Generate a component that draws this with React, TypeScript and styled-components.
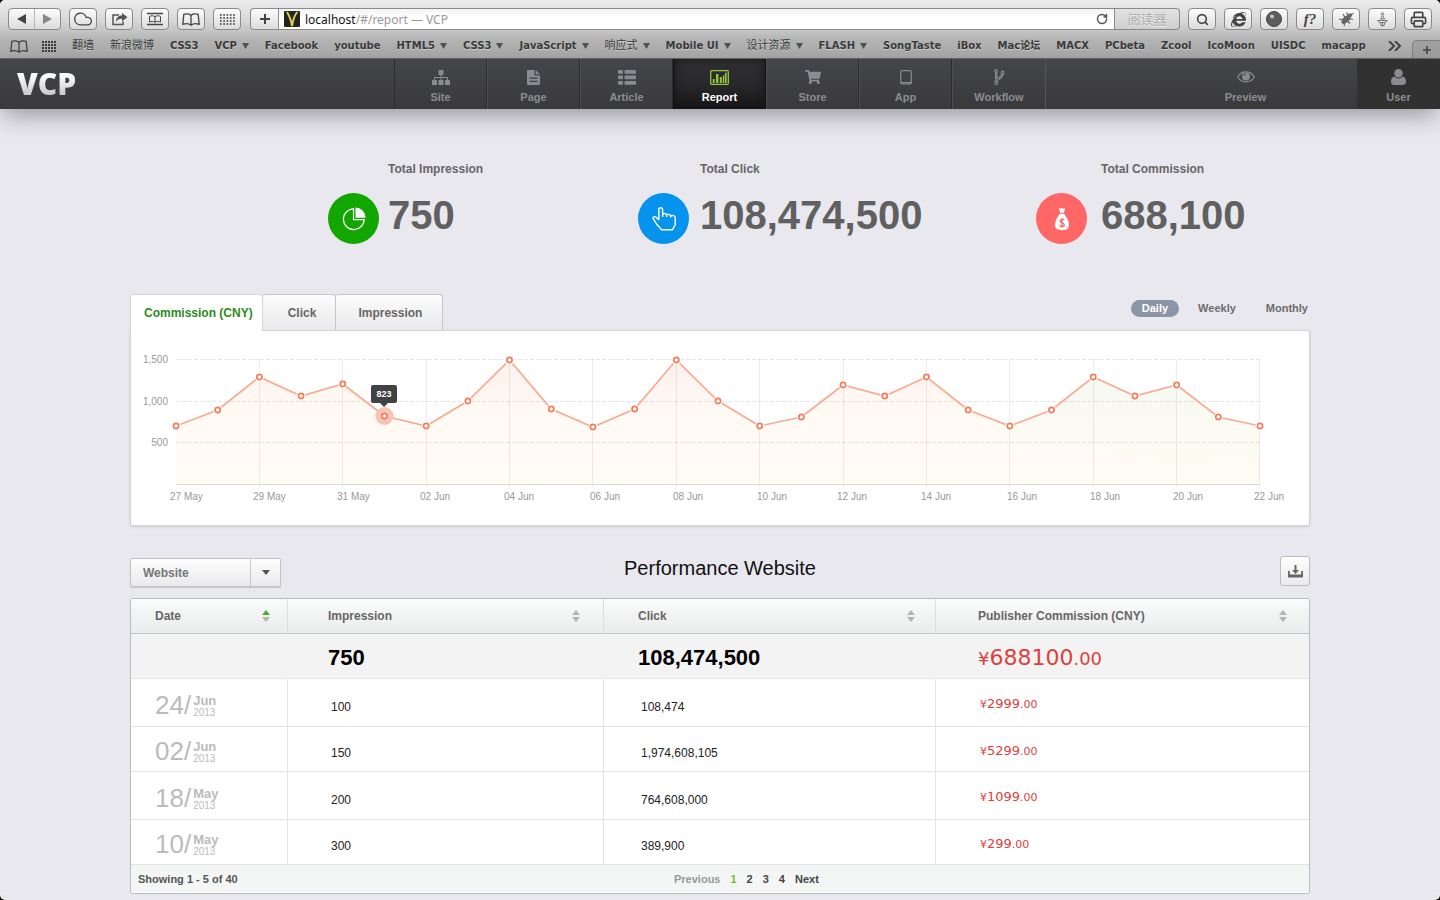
import React from 'react';
import styled, { createGlobalStyle, css } from 'styled-components';
import { Cloud, Printer, RotateCw, Search } from 'lucide-react';
import { FaInternetExplorer, FaShoppingCart } from 'react-icons/fa';

const ui = '"Liberation Sans", Arial, sans-serif';
const mac = '"Noto Sans", "Noto Sans CJK SC", sans-serif';
const bookmarkFont = '"DejaVu Sans", "Noto Sans CJK SC", sans-serif';
const money = '"DejaVu Sans", "Lucida Grande", sans-serif';

const GlobalStyle = createGlobalStyle`
  *, *::before, *::after { box-sizing: border-box; }
  html { background: #000; }
  body { margin: 0; font-family: ${ui}; font-size: 12px; color: #666; }
  button, input, select { font: inherit; color: inherit; margin: 0; padding: 0; border: 0; background: none; }
  a { color: inherit; text-decoration: none; }
  svg { display: block; }
`;

const Window = styled.div`
  min-height: 100vh;
  overflow: hidden;
  border-radius: 5px;
  background: #e9e8ee;
`;

/* ---------- browser chrome ---------- */

const Chrome = styled.div`
  height: 59px;
  display: flex;
  flex-direction: column;
  background: linear-gradient(#ececec, #d6d6d6 22px, #b3b3b3 40px, #aaaaaa);
  border-bottom: 1px solid #66666a;
  font-family: ${mac};
`;

const Toolbar = styled.div`
  display: flex;
  gap: 8px;
  padding: 8px 8px 0;
`;

const ToolButton = styled.button<{ $split?: boolean }>`
  width: 28px;
  height: 22px;
  display: flex;
  align-items: center;
  justify-content: center;
  border: 1px solid #8a8a8a;
  border-radius: 4px;
  background: linear-gradient(#fcfcfc, #dcdcdc);
  color: #444;
  ${(p) => p.$split && css`border-radius: 4px 0 0 4px; border-right: 0;`}
`;

const History = styled.div`
  display: flex;
  width: 53px;
  height: 22px;
  border: 1px solid #8a8a8a;
  border-radius: 4px;
  background: linear-gradient(#fcfcfc, #dcdcdc);
`;

const HistoryButton = styled.button`
  flex: 1;
  display: flex;
  align-items: center;
  justify-content: center;
  & + & { border-left: 1px solid #b5b5b5; }
`;

const Wide = styled.div`
  flex: 1;
  display: flex;
  min-width: 0;
  padding-left: 1px;
`;

const Address = styled.div`
  flex: 1;
  display: flex;
  align-items: center;
  height: 22px;
  min-width: 0;
  padding: 0 6px 0 5px;
  border: 1px solid #8a8a8a;
  background: linear-gradient(#f3f3f3, #fff 8px);
  font-size: 12px;
  label { color: #111; margin-left: 5px; }
  input { flex: 1; min-width: 0; color: #999; outline: none; }
`;

const Reader = styled.button`
  width: 65px;
  height: 22px;
  border: 1px solid #8a8a8a;
  border-left: 0;
  border-radius: 0 4px 4px 0;
  background: linear-gradient(#e2e2e2, #cfcfcf);
  color: #aaa;
  font-size: 13px;
  line-height: 20px;
  text-shadow: 0 1px 0 #f4f4f4;
`;

const ScriptGlyph = styled.span`
  font: italic bold 15px/20px "Liberation Serif", serif;
`;

const Bookmarks = styled.nav`
  flex: 1;
  display: flex;
  align-items: center;
  gap: 16px;
  padding: 4px 0 0 10px;
  color: #3a3a3a;
  font-family: ${bookmarkFont};
  font-size: 10px;
  font-weight: 700;
  line-height: 16px;
  text-shadow: 0 1px 0 rgba(255, 255, 255, 0.4);
`;

const Bookmark = styled.a`
  display: flex;
  align-items: center;
  gap: 5px;
  white-space: nowrap;
  &:lang(zh) { font-size: 11px; font-weight: 400; }
`;

const Shortcuts = styled.div`
  display: flex;
  align-items: center;
  gap: 14px;
`;

const Overflow = styled.button`
  margin-left: auto;
`;

const NewTab = styled.button`
  align-self: flex-end;
  display: flex;
  align-items: center;
  justify-content: center;
  width: 28px;
  height: 18px;
  margin-left: -6px;
  border: 1px solid #808080;
  border-width: 1px 0 0 1px;
  border-radius: 5px 0 0 0;
  background: #a0a0a0;
`;

/* ---------- application header ---------- */

const Header = styled.header`
  position: relative;
  display: flex;
  height: 50px;
  background: linear-gradient(#45464a, #39393c);
  box-shadow: 0 9px 24px -3px rgba(30, 30, 40, 0.42);
`;

const LogoArea = styled.div`
  flex: 0 1 394px;
  padding-left: 17px;
`;

const Logo = styled.a`
  display: inline-block;
  font: 800 30px/50px "Open Sans", sans-serif;
  background: linear-gradient(#fff 16px, #c8c8ca 36px);
  background-clip: text;
  -webkit-background-clip: text;
  color: transparent;
`;

const MainNav = styled.nav`
  display: flex;
  border-right: 1px solid #55565a;
`;

const navCell = css`
  display: flex;
  flex-direction: column;
  align-items: center;
  gap: 4px;
  height: 50px;
  padding-top: 10px;
  color: #8b8c91;
  font-size: 11px;
  font-weight: 700;
  line-height: 16px;
`;

const NavItem = styled.a<{ $active?: boolean }>`
  ${navCell}
  width: 93px;
  border-right: 1px solid #2c2c2f;
  border-left: 1px solid #4d4e52;
  &:first-child { border-left-color: #2c2c2f; }
  &:last-child { border-right: 0; }
  ${(p) => p.$active && css`
    color: #fff;
    border-color: #111;
    background: linear-gradient(#303032, #29292b 50%, #161617);
    box-shadow: inset 0 0 8px #151516;
  `}
`;

const IconSlot = styled.span`
  height: 16px;
  display: flex;
  align-items: center;
`;

const Preview = styled.a`
  ${navCell}
  width: 93px;
  margin: 0 65px 0 auto;
`;

const User = styled.a`
  ${navCell}
  width: 83px;
  background: #313131;
`;

/* ---------- page body ---------- */

const Main = styled.main`
  width: 100%;
  max-width: 1180px;
  margin: 0 auto;
  padding: 52px 0 6px;
`;

const Stats = styled.section`
  display: grid;
  grid-template-columns: 310fr 398fr 274fr;
  padding-left: 198px;
  margin-bottom: 50px;
`;

const Stat = styled.div<{ $gap: number }>`
  display: grid;
  grid-template-columns: 51px auto;
  grid-template-rows: 16px 51px;
  justify-content: start;
  column-gap: ${(p) => p.$gap}px;
  row-gap: 16px;
`;

const StatLabel = styled.h2`
  grid-column: 2;
  margin: 0;
  font-size: 12px;
  line-height: 16px;
  color: #666;
`;

const StatIcon = styled.span<{ $color: string }>`
  display: flex;
  align-items: center;
  justify-content: center;
  border-radius: 50%;
  background: ${(p) => p.$color};
`;

const StatValue = styled.strong`
  font-size: 40px;
  line-height: 44px;
  color: #606060;
`;

const TabRow = styled.div`
  display: flex;
  justify-content: space-between;
  height: 36px;
`;

const Tabs = styled.div`
  display: flex;
`;

const Tab = styled.button<{ $active?: boolean }>`
  height: 36px;
  padding: 0 19px 0 25px;
  border: 1px solid #c6c6ca;
  border-width: 1px 1px 0 0;
  border-radius: 3px 3px 0 0;
  background: linear-gradient(#fcfcfc, #e9e9eb);
  font-weight: 700;
  line-height: 34px;
  ${(p) => p.$active && css`
    height: 37px;
    padding: 0 9px 0 13px;
    border-left-width: 1px;
    border-color: #d4d4d9;
    background: #fff;
    color: #2a8c1c;
    line-height: 36px;
    z-index: 1;
  `}
  &:last-child { padding: 0 20px 0 22px; }
`;

const Periods = styled.div`
  display: flex;
  align-items: flex-start;
  gap: 8px;
  padding-top: 6px;
`;

const Period = styled.button<{ $active?: boolean }>`
  height: 17px;
  padding: 0 11px;
  border-radius: 9px;
  font-size: 11px;
  font-weight: 700;
  line-height: 17px;
  color: ${(p) => (p.$active ? '#fff' : '#6c6c6c')};
  background: ${(p) => (p.$active ? '#8b95a5' : 'none')};
  &:last-child { padding-right: 2px; }
`;

const Panel = styled.section`
  border: 1px solid #d4d4d9;
  border-radius: 0 3px 3px 3px;
  background: #fff;
  box-shadow: 0 1px 3px rgba(0, 0, 0, 0.12);
  svg { width: 100%; height: auto; }
`;

const ListBar = styled.div`
  display: grid;
  grid-template-columns: 1fr auto 1fr;
  align-items: start;
  height: 42px;
  margin-top: 30px;
`;

const SelectBox = styled.div`
  display: grid;
  grid-template-columns: 119px 30px;
  width: 151px;
  height: 29px;
  margin-top: 2px;
  border: 1px solid #c3c3c6;
  border-radius: 2px;
  background: linear-gradient(#fdfdfd, #eaeaec);
  box-shadow: 0 1px 1px rgba(0, 0, 0, 0.15);
  select {
    grid-area: 1 / 1 / 2 / 3;
    appearance: none;
    padding-left: 12px;
    font-weight: 700;
    color: #777;
    outline: none;
  }
  span {
    grid-area: 1 / 2;
    display: flex;
    align-items: center;
    justify-content: center;
    border-left: 1px solid #c6c6c9;
    pointer-events: none;
  }
`;

const Title = styled.h1`
  margin: 0;
  font-size: 20px;
  font-weight: 400;
  line-height: 24px;
  color: #111;
`;

const Download = styled.button`
  justify-self: end;
  display: flex;
  align-items: center;
  justify-content: center;
  width: 30px;
  height: 30px;
  border: 1px solid #bcbcbf;
  border-radius: 3px;
  background: linear-gradient(#fefefe, #ebebec);
`;

const TableFrame = styled.div`
  border: 1px solid #b9bcbc;
  border-radius: 2px;
  background: #fff;
  padding-bottom: 1px;
`;

const Table = styled.table`
  width: 100%;
  table-layout: fixed;
  border-collapse: separate;
  border-spacing: 0;
  th, td { padding: 0; text-align: left; }
`;

const HeadCell = styled.th<{ $left: number; $right: number }>`
  height: 35px;
  border-bottom: 1px solid #c2c5c5;
  background: linear-gradient(#fbfcfc, #e9ecea);
  &:not(:last-child) { border-right: 1px solid #dcdfdf; }
  button {
    display: flex;
    align-items: center;
    justify-content: space-between;
    width: 100%;
    height: 34px;
    padding: 0 ${(p) => p.$right}px 0 ${(p) => p.$left}px;
    font-weight: 700;
    color: #666;
  }
`;

const SumCell = styled.td<{ $left: number }>`
  && { padding: 4px 0 0 ${(p) => p.$left}px; }
  height: 45px;
  border-bottom: 1px solid #e4e4e4;
  background: #f3f3f3;
  font-size: 22px;
  font-weight: 700;
  line-height: 28px;
  color: #000;
`;

const Cell = styled.td<{ $left: number; $top?: number; $tall?: boolean }>`
  && { padding: ${(p) => p.$top ?? 4}px 0 0 ${(p) => p.$left}px; }
  height: ${(p) => (p.$tall ? 48 : 45)}px;
  border-bottom: 1px solid #e2e2e2;
  line-height: 16px;
  color: #222;
  &:not(:last-child) { border-right: 1px solid #e4e4e4; }
`;

const Price = styled.span<{ $large?: boolean }>`
  font-family: ${money};
  font-weight: 400;
  font-size: ${(p) => (p.$large ? 22 : 13)}px;
  color: #e0403c;
  small { font-size: ${(p) => (p.$large ? 18 : 11)}px; }
`;

const DateMark = styled.time`
  display: flex;
  align-items: center;
  gap: 2px;
  color: #bbb;
`;

const Day = styled.span`
  font-size: 26px;
  line-height: 28px;
`;

const MonthYear = styled.span`
  display: flex;
  flex-direction: column;
  padding-top: 2px;
  font-size: 10px;
  line-height: 10px;
  b { font-size: 13px; line-height: 14px; }
`;

const FootCell = styled.td<{ $left: number }>`
  && { padding-left: ${(p) => p.$left}px; }
  height: 27px;
  background: #f4f6f5;
  font-size: 11px;
  font-weight: 700;
  color: #555;
`;

const Pager = styled.nav`
  display: flex;
  gap: 10px;
`;

const PageLink = styled.a<{ $tone?: string }>`
  color: ${(p) => p.$tone || '#444'};
`;

/* ---------- drawings ---------- */

const Caret = ({ w = 7, h = 6 }: { w?: number; h?: number }) => (
  <svg width={w} height={h} viewBox="0 0 8 6" preserveAspectRatio="none"><path d="M0 0h8L4 6z" fill="#505050" /></svg>
);

const Sorter = ({ up = false }: { up?: boolean }) => (
  <svg width="8" height="12" viewBox="0 0 8 12">
    <path d="M0 5l4-5 4 5z" fill={up ? '#4aa83a' : '#b4b4b4'} />
    <path d="M0 7h8l-4 5z" fill="#b4b4b4" />
  </svg>
);

const Dots = ({ cols, rows, gap, size }: { cols: number; rows: number; gap: number; size: number }) => (
  <svg width={cols * gap - gap + size} height={rows * gap - gap + size}>
    {Array.from({ length: cols * rows }, (_, i) => (
      <rect key={i} x={(i % cols) * gap} y={Math.floor(i / cols) * gap} width={size} height={size} fill="#3c3c3c" />
    ))}
  </svg>
);

const Plus = ({ s }: { s: number }) => (
  <svg width={s} height={s} viewBox="0 0 10 10"><path d="M5 0v10M0 5h10" stroke="#444" strokeWidth="2" /></svg>
);

const BookIcon = () => (
  <svg width="18" height="13" viewBox="0 0 18 13" fill="none" stroke="#444" strokeWidth="1.300" strokeLinejoin="round">
    <path d="M9 2.500C7.500.8 4 .4 1.800 1.400L.8 11.400c2.400-1 6-1 8.200.8 2.200-1.800 5.800-1.800 8.200-.8l-1-10C14 .4 10.500.8 9 2.500zM9 2.500v9.500" />
  </svg>
);

const SiteIcon = () => (
  <svg width="18" height="15" viewBox="0 0 18 15" fill="currentColor">
    <rect x="6.5" width="5" height="5" rx=".6" /><rect y="10" width="5" height="5" rx=".6" />
    <rect x="6.5" y="10" width="5" height="5" rx=".6" /><rect x="13" y="10" width="5" height="5" rx=".6" />
    <path d="M9 5v5M2.5 10V7.5h13V10" fill="none" stroke="currentColor" />
  </svg>
);
const PageIcon = () => (
  <svg width="13" height="15" viewBox="0 0 13 15">
    <path fillRule="evenodd" fill="currentColor" d="M1 0h6.500v5.500H13V14a1 1 0 0 1-1 1H1a1 1 0 0 1-1-1V1a1 1 0 0 1 1-1zM2.500 7.500v1.200h8V7.500zM2.500 10.800V12h8v-1.200zM8.700 0L13 4.300H8.700z" />
  </svg>
);
const ArticleIcon = () => (
  <svg width="18" height="15" viewBox="0 0 18 15" fill="currentColor">
    {[0, 5.5, 11].map((y) => <g key={y}><rect y={y} width="5" height="3.8" rx="1" /><rect x="6.500" y={y} width="11.500" height="3.800" rx="1" /></g>)}
  </svg>
);
const ReportIcon = () => (
  <svg width="19" height="15" viewBox="0 0 19 15" fill="#92c83e">
    <rect x=".7" y=".7" width="17.600" height="13.600" rx="1" fill="none" stroke="#92c83e" strokeWidth="1.300" />
    <path d="M2.700 9h2v4h-2zM6 4h2.400v9H6zM9.800 7h2v6h-2zM12.800 5.500h1.600V13h-1.600zM15 2.800h1.600V13H15z" />
  </svg>
);
const AppIcon = () => (
  <svg width="12" height="15" viewBox="0 0 12 15">
    <rect x=".7" y=".7" width="10.600" height="13.300" rx="1.600" fill="none" stroke="currentColor" strokeWidth="1.200" />
    <path d="M1 12h10v1.500H7l-1-.7-1 .7H1z" fill="currentColor" />
  </svg>
);
const FlowIcon = () => (
  <svg width="11" height="16" viewBox="0 0 11 16" fill="none" stroke="currentColor" strokeWidth="1.100">
    <circle cx="2.200" cy="2" r="1.400" /><circle cx="2.200" cy="14" r="1.400" /><circle cx="8.600" cy="3.500" r="1.400" />
    <path d="M1.600 3.300v9.400M2.900 3.300v6.200c3-1.300 4.600-2.500 5-4.600M9.200 4.900c-.3 3.500-2.700 5-6.100 6.600v1.200" />
  </svg>
);
const EyeIcon = () => (
  <svg width="18" height="12" viewBox="0 0 18 12">
    <path d="M.7 6C4.500-.8 13.500-.8 17.300 6 13.500 12.500 4.500 12.500.7 6z" fill="none" stroke="currentColor" strokeWidth="1.200" />
    <circle cx="9" cy="5.400" r="4" fill="currentColor" /><path d="M6.800 5A2.400 2.400 0 0 1 9 2.800" fill="none" stroke="#444" />
  </svg>
);
const UserIcon = () => (
  <svg width="15" height="16" viewBox="0 0 15 16" fill="currentColor">
    <circle cx="7.500" cy="4.200" r="4.200" />
    <path d="M3.200 7.600C1 8.200 0 10 0 12.800 0 14.800 1.200 16 3 16h9c1.800 0 3-1.200 3-3.200 0-2.800-1-4.600-3.200-5.200a6 6 0 0 1-8.600 0z" />
  </svg>
);

const PieIcon = () => (
  <svg width="24" height="24" viewBox="0 0 24 24">
    <path d="M11.500 1.800A10.400 10.400 0 1 0 22.200 12.700H11.500z" fill="none" stroke="#fff" strokeWidth="1.200" />
    <path d="M13.500.5A10.200 10.200 0 0 1 23.500 10.700h-10z" fill="#fff" />
  </svg>
);
const HandIcon = () => (
  <svg width="24" height="24" viewBox="0 0 24 24" fill="none" stroke="#fff" strokeWidth="1.400" strokeLinejoin="round">
    <path d="M6.800 13V2.600a1.900 1.900 0 0 1 3.800 0V10M10.600 7.200c1-1.200 4-1 4 .8v2M14.600 8c1-1 4-.8 4 1v1.600M18.600 9c1.500-1 4.600-.6 4.600 1.700V18l-2.700 4.700H9.500L4.200 16.500l-3-4.800C.4 9.500 3.300 9 4.400 10.500L6.800 13" />
  </svg>
);
const BagIcon = () => (
  <svg width="14" height="24" viewBox="0 0 14 24">
    <path d="M4 1l1.500.7L7 1l1.500.7L10 1 9 5.800H5zM5 6.800h4C11.500 10 14 14 14 18c0 3.500-2.500 5.200-7 5.200S0 21.500 0 18c0-4 2.500-8 5-11.200z" fill="#fff" />
    <path d="M9.200 13.300C8.500 12 5 12 5 14s4.300 1.700 4.300 3.900-3.700 2.200-4.600.5M7 11.200v9.300" fill="none" stroke="#ff6666" strokeWidth="1.300" />
  </svg>
);

/* ---------- chart ---------- */

const levels = [426, 410, 377, 396, 384, 416, 426, 401, 360, 409, 427, 409, 360, 401, 426, 417, 385, 396, 377, 410, 426, 410, 377, 396, 385, 417, 426];
const dayLabels: [string, number][] = [
  ['27 May', 170], ['29 May', 253], ['31 May', 337], ['02 Jun', 420], ['04 Jun', 504], ['06 Jun', 590], ['08 Jun', 673],
  ['10 Jun', 757], ['12 Jun', 837], ['14 Jun', 921], ['16 Jun', 1007], ['18 Jun', 1090], ['20 Jun', 1173], ['22 Jun', 1254],
];
const points = levels.map((y, i) => [45 + (i * 1084) / 26, y - 331]);
const line = points.map((p) => p.join(' ')).join('L');

const Chart = () => (
  <svg viewBox="0 0 1178 194" role="img" aria-label="Commission per day" fontFamily={ui}>
    <defs>
      <linearGradient id="area" gradientUnits="userSpaceOnUse" x1="0" y1="28" x2="0" y2="154">
        <stop offset="0" stopColor="#fdf0ec" /><stop offset=".45" stopColor="#fffaf4" /><stop offset="1" stopColor="#fffcf4" />
      </linearGradient>
      <linearGradient id="late" gradientUnits="userSpaceOnUse" x1="0" y1="40" x2="0" y2="132">
        <stop offset="0" stopColor="#f8f8f3" /><stop offset=".75" stopColor="#fbfbf3" /><stop offset="1" stopColor="#fdfbf1" />
      </linearGradient>
    </defs>
    <path d={`M45 153.500L${line}L1129 153.500z`} fill="url(#area)" />
    <path d={`M878.900 118L${points.slice(20).map((p) => p.join(' ')).join('L')}L1129 120Q1060 142 1010 127T878.900 120z`} fill="url(#late)" />
    {dayLabels.slice(1).map((_, i) => (
      <path key={i} d={`M${Math.floor(45 + ((i + 1) * 1084) / 13) - (i === 12 ? 0.5 : -0.5)} 28V156`} stroke="#000" strokeOpacity=".07" />
    ))}
    {[28.500, 70.500, 111.500].map((y, i) => (
      <g key={y}>
        <path d={`M45 ${y}H1128`} stroke="#000" strokeOpacity=".1" strokeDasharray="4 2" />
        <text x="37" y={Math.floor(y) + 4} textAnchor="end" fontSize="10" fill="#999">{['1,500', '1,000', '500'][i]}</text>
      </g>
    ))}
    <path d="M45 153.500H1128" stroke="#d8d8d8" />
    <path d={`M${line}`} fill="none" stroke="#f8ab92" strokeWidth="1.700" />
    <circle cx={points[5][0]} cy={points[5][1]} r="9" fill="#f9c3b3" />
    {points.map(([x, y], i) => (
      <g key={i}>
        {i !== 5 && <circle cx={x} cy={y} r="4.500" fill="#fff" />}
        <circle cx={x} cy={y} r="2.600" fill="#fff" stroke="#f47c5a" strokeWidth="1.700" />
      </g>
    ))}
    <path d="M242 54h22a2 2 0 0 1 2 2v14a2 2 0 0 1-2 2h-7l-4 4-4-4h-7a2 2 0 0 1-2-2V56a2 2 0 0 1 2-2z" fill="#414342" />
    <text x="253" y="66" textAnchor="middle" fontSize="9" fontWeight="700" fill="#fff">823</text>
    {dayLabels.map(([t, x]) => <text key={t} x={x - 131} y="169" fontSize="10" fill="#999">{t}</text>)}
  </svg>
);

/* ---------- data ---------- */

type BookmarkEntry = { name: string; menu?: boolean; lang?: string };
const bookmarks: BookmarkEntry[] = [
  { name: '翻墙', lang: 'zh' }, { name: '新浪微博', lang: 'zh' }, { name: 'CSS3' }, { name: 'VCP', menu: true },
  { name: 'Facebook' }, { name: 'youtube' }, { name: 'HTML5', menu: true }, { name: 'CSS3', menu: true },
  { name: 'JavaScript', menu: true }, { name: '响应式', menu: true, lang: 'zh' }, { name: 'Mobile UI', menu: true },
  { name: '设计资源', menu: true, lang: 'zh' }, { name: 'FLASH', menu: true }, { name: 'SongTaste' }, { name: 'iBox' },
  { name: 'Mac论坛' }, { name: 'MACX' }, { name: 'PCbeta' }, { name: 'Zcool' }, { name: 'IcoMoon' }, { name: 'UISDC' },
  { name: 'macapp' },
];

const sections: [string, React.ReactNode][] = [
  ['Site', <SiteIcon />], ['Page', <PageIcon />], ['Article', <ArticleIcon />], ['Report', <ReportIcon />],
  ['Store', <FaShoppingCart size={16} />], ['App', <AppIcon />], ['Workflow', <FlowIcon />],
];

const stats = [
  { label: 'Total Impression', value: '750', color: '#12a700', gap: 9, icon: <PieIcon /> },
  { label: 'Total Click', value: '108,474,500', color: '#0593ee', gap: 11, icon: <HandIcon /> },
  { label: 'Total Commission', value: '688,100', color: '#ff6666', gap: 14, icon: <BagIcon /> },
];

const columns = [
  { name: 'Date', left: 24, right: 17 }, { name: 'Impression', left: 40, right: 23 },
  { name: 'Click', left: 34, right: 20 }, { name: 'Publisher Commission (CNY)', left: 42, right: 22 },
];

const rows = [
  { day: '24', month: 'Jun', impression: '100', click: '108,474', price: '2999', tall: true },
  { day: '02', month: 'Jun', impression: '150', click: '1,974,608,105', price: '5299', tall: false },
  { day: '18', month: 'May', impression: '200', click: '764,608,000', price: '1099', tall: true },
  { day: '10', month: 'May', impression: '300', click: '389,900', price: '299', tall: false },
];

export default function App() {
  return (
    <Window>
      <GlobalStyle />
      <Chrome>
        <Toolbar>
          <History>
            <HistoryButton aria-label="Back"><svg width="9" height="10"><path d="M9 0v10L0 5z" fill="#444" /></svg></HistoryButton>
            <HistoryButton aria-label="Forward"><svg width="9" height="10"><path d="M0 0v10l9-5z" fill="#888" /></svg></HistoryButton>
          </History>
          <ToolButton aria-label="iCloud"><Cloud size={20} strokeWidth={1.6} /></ToolButton>
          <ToolButton aria-label="Share">
            <svg width="17" height="14" viewBox="0 0 17 14">
              <path d="M8 3H2v9.500h10V9.500" fill="none" stroke="#555" strokeWidth="1.500" />
              <path d="M5 10c0-4 2-6.500 6-6.500V1l5.500 4.300L11 9.300V6.800C8.500 6.500 6.500 7.500 5 10z" fill="#555" />
            </svg>
          </ToolButton>
          <ToolButton aria-label="Top sites">
            <svg width="16" height="14" viewBox="0 0 16 14" fill="none" stroke="#444">
              <path d="M0 1.500h16M0 12.500h16" strokeWidth="1.300" /><path d="M2.500 10V4.500C4 3.500 6.500 3.500 8 4.700c1.500-1.200 4-1.200 5.500-.2V10c-1.500-.8-4-.8-5.500.3C6.500 9.200 4 9.200 2.500 10zM8 4.700v5.600" />
            </svg>
          </ToolButton>
          <ToolButton aria-label="Reading list"><BookIcon /></ToolButton>
          <ToolButton aria-label="All tabs">
            <svg width="15" height="11" viewBox="0 0 15 11" stroke="#333" strokeWidth="1.500">
              <path d="M0 1h15M0 4h15M0 7h15M0 10h15" strokeDasharray="1.600 1.700" />
            </svg>
          </ToolButton>
          <Wide>
            <ToolButton $split aria-label="Add bookmark"><Plus s={10} /></ToolButton>
            <Address>
              <svg width="16" height="16" viewBox="0 0 16 16"><rect width="16" height="16" rx="1" fill="#25251f" /><path d="M3 1c2 3 4 8 5 14C9 9 11 3 13.500 1" fill="none" stroke="#d8cc55" strokeWidth="2" /></svg>
              <label htmlFor="address">localhost</label>
              <input id="address" defaultValue="/#/report — VCP" />
              <RotateCw size={12} strokeWidth={3} color="#555" />
            </Address>
            <Reader>阅读器</Reader>
          </Wide>
          <ToolButton aria-label="Search"><Search size={13} strokeWidth={3} /></ToolButton>
          <ToolButton aria-label="Open in Explorer"><FaInternetExplorer size={15} /></ToolButton>
          <ToolButton aria-label="Lens">
            <svg width="16" height="16"><circle cx="8" cy="8" r="7.500" fill="#5c5c5c" stroke="#444" /><circle cx="6" cy="5.500" r="2" fill="#c4c4c4" /></svg>
          </ToolButton>
          <ToolButton aria-label="Font finder"><ScriptGlyph>f?</ScriptGlyph></ToolButton>
          <ToolButton aria-label="Debug">
            <svg width="16" height="16" viewBox="0 0 16 16">
              <ellipse cx="8" cy="8.500" rx="5.600" ry="3" transform="rotate(-42 8 8.500)" fill="#666" />
              <circle cx="12" cy="4.300" r="2" fill="#666" />
              <path d="M5 9L1 8M7 6.500L5 3M10 5L8.500 1.500M6 11.500l.5 3.500M9 9.500l3 3M11 7.500l4 1M13 3.500l2.500-1" stroke="#666" strokeWidth="1.200" />
            </svg>
          </ToolButton>
          <ToolButton aria-label="Lamp">
            <svg width="11" height="15" viewBox="0 0 11 15" fill="none" stroke="#777"><circle cx="5.500" cy="2" r="1.300" /><path d="M5.500 3.500L3.500 7h4zM.5 8.500h10L8 10.500H3zM3 11l1 2.500h3L8 11M5.500 11v3.500" /></svg>
          </ToolButton>
          <ToolButton aria-label="Print"><Printer size={17} strokeWidth={2.3} /></ToolButton>
        </Toolbar>
        <Bookmarks aria-label="Bookmarks">
          <Shortcuts>
            <BookIcon />
            <Dots cols={5} rows={4} gap={3} size={2} />
          </Shortcuts>
          {bookmarks.map((b, i) => (
            <Bookmark key={i} href="#" lang={b.lang}>{b.name}{b.menu && <Caret />}</Bookmark>
          ))}
          <Overflow aria-label="More bookmarks">
            <svg width="14" height="10" viewBox="0 0 14 10"><path d="M1 0l5 5-5 5M7 0l5 5-5 5" fill="none" stroke="#444" strokeWidth="2" /></svg>
          </Overflow>
          <NewTab aria-label="New tab"><Plus s={8} /></NewTab>
        </Bookmarks>
      </Chrome>

      <Header>
        <LogoArea><Logo href="#">VCP</Logo></LogoArea>
        <MainNav>
          {sections.map(([name, icon]) => (
            <NavItem key={name} href="#" $active={name === 'Report'}><IconSlot>{icon}</IconSlot>{name}</NavItem>
          ))}
        </MainNav>
        <Preview href="#"><IconSlot><EyeIcon /></IconSlot>Preview</Preview>
        <User href="#"><IconSlot><UserIcon /></IconSlot>User</User>
      </Header>

      <Main>
        <Stats>
          {stats.map((s) => (
            <Stat key={s.label} $gap={s.gap}>
              <StatLabel>{s.label}</StatLabel>
              <StatIcon $color={s.color}>{s.icon}</StatIcon>
              <StatValue>{s.value}</StatValue>
            </Stat>
          ))}
        </Stats>

        <TabRow>
          <Tabs>
            <Tab $active>Commission (CNY)</Tab>
            <Tab>Click</Tab>
            <Tab>Impression</Tab>
          </Tabs>
          <Periods>
            <Period $active>Daily</Period>
            <Period>Weekly</Period>
            <Period>Monthly</Period>
          </Periods>
        </TabRow>
        <Panel><Chart /></Panel>

        <ListBar>
          <SelectBox>
            <select aria-label="Group by" defaultValue="Website"><option>Website</option></select>
            <span><Caret w={8} h={5} /></span>
          </SelectBox>
          <Title>Performance Website</Title>
          <Download aria-label="Download">
            <svg width="15" height="13" viewBox="0 0 15 13" fill="#666">
              <path d="M6.500 0h2v5H11L7.500 9 4 5h2.500z" /><path d="M0 6h1.800v3.500h11.400V6H15v6.500H0z" />
            </svg>
          </Download>
        </ListBar>

        <TableFrame>
          <Table>
            <colgroup><col width="157" /><col width="316" /><col width="332" /><col /></colgroup>
            <thead>
              <tr>
                {columns.map((c, i) => (
                  <HeadCell key={c.name} $left={c.left} $right={c.right}><button>{c.name}<Sorter up={i === 0} /></button></HeadCell>
                ))}
              </tr>
            </thead>
            <tbody>
              <tr>
                <SumCell $left={24} />
                <SumCell $left={40}>750</SumCell>
                <SumCell $left={34}>108,474,500</SumCell>
                <SumCell $left={42}><Price $large><small>¥</small>688100<small>.00</small></Price></SumCell>
              </tr>
              {rows.map((r) => (
                <tr key={r.day}>
                  <Cell $left={24} $tall={r.tall}>
                    <DateMark><Day>{r.day}/</Day><MonthYear><b>{r.month}</b>2013</MonthYear></DateMark>
                  </Cell>
                  <Cell $left={43} $top={8}>{r.impression}</Cell>
                  <Cell $left={37} $top={8}>{r.click}</Cell>
                  <Cell $left={44}><Price><small>¥</small>{r.price}<small>.00</small></Price></Cell>
                </tr>
              ))}
            </tbody>
            <tfoot>
              <tr>
                <FootCell $left={7} colSpan={2}>Showing 1 - 5 of 40</FootCell>
                <FootCell $left={70} colSpan={2}>
                  <Pager aria-label="Pages">
                    <PageLink href="#" $tone="#999">Previous</PageLink>
                    <PageLink href="#" $tone="#7ab832">1</PageLink>
                    <PageLink href="#">2</PageLink>
                    <PageLink href="#">3</PageLink>
                    <PageLink href="#">4</PageLink>
                    <PageLink href="#">Next</PageLink>
                  </Pager>
                </FootCell>
              </tr>
            </tfoot>
          </Table>
        </TableFrame>
      </Main>
    </Window>
  );
}
